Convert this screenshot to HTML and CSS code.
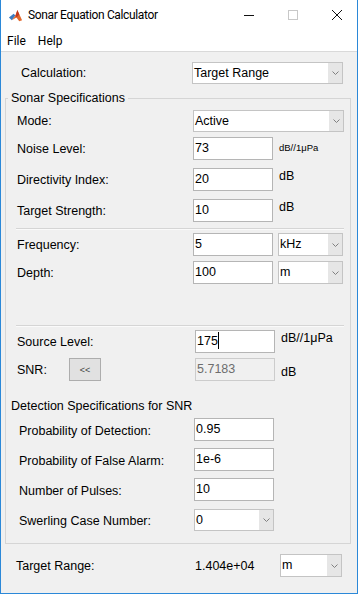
FILE: index.html
```html
<!DOCTYPE html>
<html lang="en">
<head>
  <meta charset="UTF-8" />
  <title>Sonar Equation Calculator</title>
  <link rel="stylesheet" href="styles.css">
</head>
<body>
  <div class="window">

    <div class="titlebar">
      <svg class="app-icon" viewBox="0 0 16 16" aria-hidden="true">
        <path d="M1 10 L6 6 L8 8 L4 13 Z" fill="#3d7cc0"/>
        <path d="M6 6 L8 8 L10 2 L15 13 L12 14 L9 10 L4 13 L8 8 Z" fill="#e2682c"/>
        <path d="M10 2 L12 7 L9 10 L8 8 Z" fill="#c4391d"/>
      </svg>
      <span class="title">Sonar Equation Calculator</span>
      <div class="win-controls">
        <svg class="ctl" viewBox="0 0 10 10" aria-hidden="true"><path d="M0 5.5 H10" stroke="#111" stroke-width="1"/></svg>
        <svg class="ctl" viewBox="0 0 10 10" aria-hidden="true"><rect x="0.5" y="0.5" width="9" height="9" fill="none" stroke="#c8c8c8" stroke-width="1"/></svg>
        <svg class="ctl" viewBox="0 0 10 10" aria-hidden="true"><path d="M0 0 L10 10 M10 0 L0 10" stroke="#111" stroke-width="1"/></svg>
      </div>
    </div>

    <div class="menubar">
      <span>File</span>
      <span>Help</span>
    </div>

    <div class="content">
      <div class="calc-row">
        <span class="lbl">Calculation:</span>
        <div class="select wide">
          <span class="val">Target Range</span>
          <span class="arrow"><svg viewBox="0 0 7 4"><path d="M0.5 0.5 L3.5 3.5 L6.5 0.5" fill="none" stroke="#808080"/></svg></span>
        </div>
      </div>

      <fieldset class="panel">
        <legend>Sonar Specifications</legend>

        <div class="row">
          <span class="lbl">Mode:</span>
          <div class="select wide">
            <span class="val">Active</span>
            <span class="arrow"><svg viewBox="0 0 7 4"><path d="M0.5 0.5 L3.5 3.5 L6.5 0.5" fill="none" stroke="#808080"/></svg></span>
          </div>
        </div>
        <div class="row tight">
          <span class="lbl">Noise Level:</span>
          <div class="field">73</div>
          <span class="unit small">dB//1μPa</span>
        </div>
        <div class="row loose">
          <span class="lbl">Directivity Index:</span>
          <div class="field">20</div>
          <span class="unit top">dB</span>
        </div>
        <div class="row loose">
          <span class="lbl">Target Strength:</span>
          <div class="field">10</div>
          <span class="unit top">dB</span>
        </div>

        <div class="sep"></div>

        <div class="row">
          <span class="lbl">Frequency:</span>
          <div class="field">5</div>
          <div class="select unit-select">
            <span class="val">kHz</span>
            <span class="arrow"><svg viewBox="0 0 7 4"><path d="M0.5 0.5 L3.5 3.5 L6.5 0.5" fill="none" stroke="#808080"/></svg></span>
          </div>
        </div>
        <div class="row tight">
          <span class="lbl">Depth:</span>
          <div class="field">100</div>
          <div class="select unit-select">
            <span class="val">m</span>
            <span class="arrow"><svg viewBox="0 0 7 4"><path d="M0.5 0.5 L3.5 3.5 L6.5 0.5" fill="none" stroke="#808080"/></svg></span>
          </div>
        </div>

        <div class="sep far"></div>

        <div class="row source">
          <span class="lbl">Source Level:</span>
          <div class="field">175<span class="caret"></span></div>
          <span class="unit top">dB//1μPa</span>
        </div>
        <div class="row tight snr">
          <span class="lbl short">SNR:</span>
          <button class="swap">&lt;&lt;</button>
          <div class="field disabled">5.7183</div>
          <span class="unit low">dB</span>
        </div>

        <div class="subhead">Detection Specifications for SNR</div>

        <div class="detect">
          <div class="row">
            <span class="lbl">Probability of Detection:</span>
            <div class="field">0.95</div>
          </div>
          <div class="row">
            <span class="lbl">Probability of False Alarm:</span>
            <div class="field">1e-6</div>
          </div>
          <div class="row">
            <span class="lbl">Number of Pulses:</span>
            <div class="field">10</div>
          </div>
          <div class="row">
            <span class="lbl">Swerling Case Number:</span>
            <div class="select narrow">
              <span class="val">0</span>
              <span class="arrow"><svg viewBox="0 0 7 4"><path d="M0.5 0.5 L3.5 3.5 L6.5 0.5" fill="none" stroke="#808080"/></svg></span>
            </div>
          </div>
        </div>
      </fieldset>

      <div class="result-row">
        <span class="lbl">Target Range:</span>
        <span class="result">1.404e+04</span>
        <div class="select result-unit">
          <span class="val">m</span>
          <span class="arrow"><svg viewBox="0 0 7 4"><path d="M0.5 0.5 L3.5 3.5 L6.5 0.5" fill="none" stroke="#808080"/></svg></span>
        </div>
      </div>
    </div>

  </div>
</body>
</html>
```

FILE: styles.css
```css
* {
  box-sizing: border-box;
}

html, body {
  margin: 0;
  height: 100%;
  background: #fff;
}

.window {
  height: 594px;
  display: flex;
  flex-direction: column;
  border: 1px solid #2b88d8;
  border-top: none;
  font-family: 'Liberation Sans', Arial, sans-serif;
  font-size: 12.5px;
  color: #000;
}

/* title bar */
.titlebar {
  height: 30px;
  display: flex;
  align-items: center;
  background: #fff;
  font-family: Roboto, 'Segoe UI', sans-serif;
}

.app-icon {
  width: 15px;
  height: 15px;
  margin-left: 7px;
}

.title {
  margin-left: 5px;
  font-size: 12px;
  letter-spacing: -0.35px;
  color: #000;
}

.win-controls {
  margin-left: auto;
  display: flex;
  align-items: center;
  gap: 34px;
  padding-right: 15px;
}

.ctl {
  width: 10px;
  height: 10px;
}

/* menu */
.menubar {
  height: 22px;
  display: flex;
  align-items: center;
  gap: 12px;
  padding-left: 6px;
  background: #fff;
  border-bottom: 1px solid #d9d9d9;
  font-family: Roboto, 'Segoe UI', sans-serif;
  font-size: 12px;
}

/* main area */
.content {
  flex: 1;
  background: #f0f0f0;
  padding-top: 10px;
}

.calc-row {
  display: flex;
  align-items: center;
  height: 22px;
  padding-left: 20px;
}

.calc-row .lbl {
  width: 171px;
}

.select {
  display: flex;
  height: 22px;
  background: #fff;
  border: 1px solid #c4c4c4;
}

.select .val {
  flex: 1;
  line-height: 20px;
  padding-left: 1px;
}

.select .arrow {
  width: 14px;
  background: #e6e6e6;
  display: flex;
  align-items: center;
  justify-content: center;
}

.select .arrow svg {
  width: 7px;
  height: 4px;
}

.select.wide {
  width: 151px;
}

.select.unit-select {
  width: 65px;
  height: 23px;
  margin-left: 5px;
}

.select.narrow {
  width: 80px;
}

/* panel */
.panel {
  width: 346px;
  margin: 7px 0 0 4px;
  padding: 0 0 12px 0;
  min-width: 0;
  border: 1px solid #d5d5d5;
}

.panel legend {
  margin-left: 2px;
  padding: 0 3px;
  line-height: 14px;
  font-size: 12.5px;
}

.row {
  display: flex;
  align-items: center;
  height: 23px;
  padding-left: 11px;
  margin-top: 7px;
}

legend + .row {
  margin-top: 5px;
  height: 22px;
}

.row.tight {
  margin-top: 5px;
}

.row.loose {
  margin-top: 8px;
}

.row .lbl {
  width: 176px;
}

.field {
  width: 80px;
  height: 23px;
  line-height: 21px;
  border: 1px solid #b5b5b5;
  background: #fff;
  padding-left: 1px;
  white-space: nowrap;
}

.field.disabled {
  background: #f0f0f0;
  border-color: #cccccc;
  color: #6d6d6d;
}

.caret {
  display: inline-block;
  width: 1px;
  height: 17px;
  background: #000;
  vertical-align: -4px;
}

.unit {
  margin-left: 6px;
}

.unit.small {
  font-size: 9.5px;
  margin-top: -3px;
}

.unit.top {
  align-self: flex-start;
  line-height: 14px;
  margin-top: 1px;
}

.unit.low {
  margin-top: 5px;
}

.sep {
  margin: 6px 0 0 10px;
  width: 328px;
  border-top: 1px solid #d5d5d5;
  border-bottom: 1px solid #fafafa;
}

.sep.far {
  margin-top: 41px;
}

.sep + .row {
  margin-top: 3px;
}

.row.source .lbl {
  width: 178px;
}

.row.snr .lbl.short {
  width: 52px;
}

.swap {
  width: 32px;
  height: 23px;
  margin: 0;
  padding: 0;
  border: 1px solid #adadad;
  background: #e1e1e1;
  color: #444;
  font-family: inherit;
  font-size: 9px;
}

.row.snr .field {
  margin-left: 94px;
}

.subhead {
  margin-top: 18px;
  padding-left: 5px;
  line-height: 15px;
}

.detect .row {
  padding-left: 13px;
}

.detect .row:first-child {
  margin-top: 4px;
}

.detect .lbl {
  width: 175px;
  padding-top: 3px;
}

/* result */
.result-row {
  display: flex;
  align-items: center;
  height: 23px;
  margin-top: 10px;
  padding-left: 15px;
}

.result-row .lbl {
  width: 179px;
}

.result {
  width: 85px;
}

.select.result-unit {
  width: 62px;
  height: 23px;
}
```
